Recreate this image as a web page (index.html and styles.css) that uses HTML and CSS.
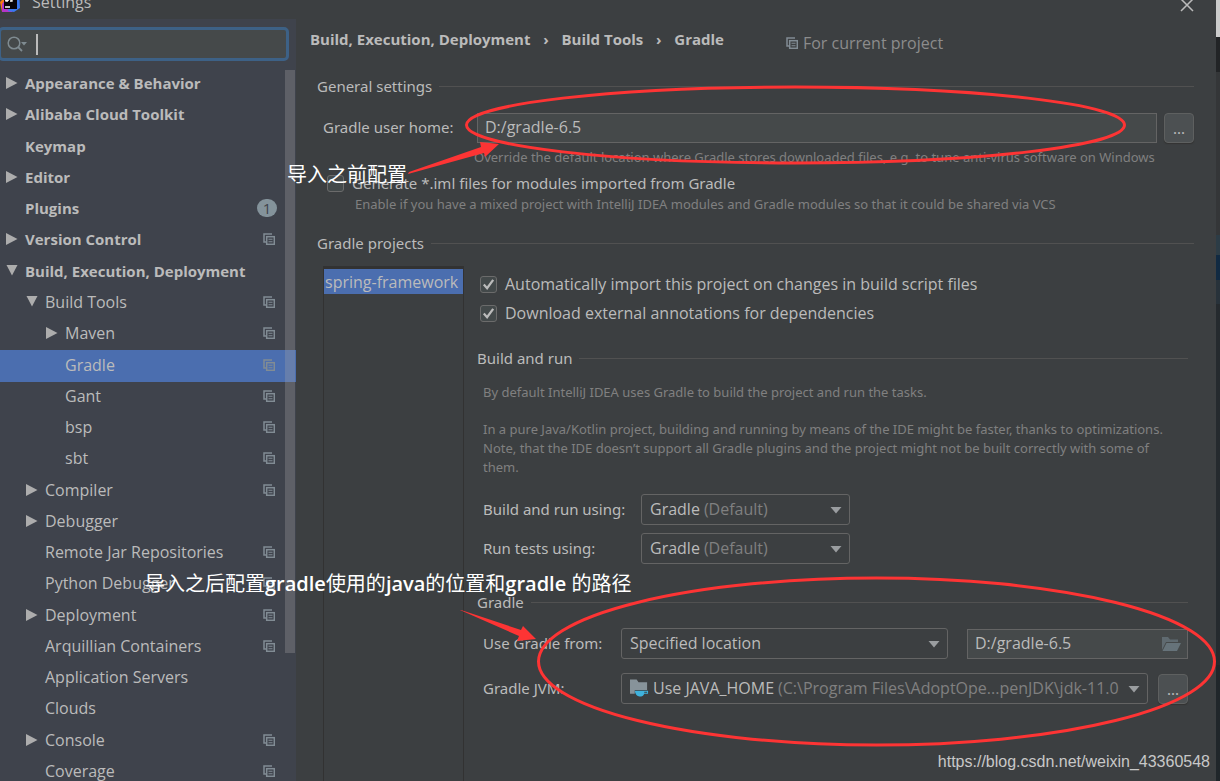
FILE: index.html
```html
<!DOCTYPE html>
<html lang="en">
<head>
<meta charset="utf-8">
<title>Settings</title>
<link rel="stylesheet" href="styles.css">
</head>
<body>
<svg class="defs" aria-hidden="true">
  <symbol id="copy" viewBox="0 0 12 12"><path d="M1 9V1H9M1 1V9H3" fill="none" stroke="currentColor" stroke-width="1.5"/><rect x="3.7" y="3.7" width="7.6" height="7.6" fill="none" stroke="currentColor" stroke-width="1.5"/><path d="M5.500 6.3H9.5M5.500 8.7H9.5" stroke="currentColor" stroke-width="1.1"/></symbol>
  <symbol id="right" viewBox="0 0 12 12"><path d="M0 0V12L11.500 6Z" fill="currentColor"/></symbol>
  <symbol id="down" viewBox="0 0 12 12"><path d="M0.500 0H11.500L6 10.500Z" fill="currentColor"/></symbol>
  <symbol id="drop" viewBox="0 0 12 8"><path d="M0.500 1H11.500L6 7.500Z" fill="currentColor"/></symbol>
</svg>
<div class="window">
  <header class="titlebar">
    <svg class="logo" width="20" height="20" viewBox="0 0 20 20" aria-hidden="true"><path d="M0 10L5 5V18L2 20Z" fill="#f97a12"/><path d="M2 12L5 8V17H14L12 20H2Z" fill="#b236c8"/><path d="M12 0H19L20 16L14 20L8 19L9 15H15Z" fill="#3a78f0"/><rect x="4" y="4" width="13" height="13" fill="#080408"/><path d="M5 8H9M6 6V9H8M12 5V9H10M5 15H10" stroke="#fff" stroke-width="1.3" fill="none"/></svg>
    <h1 class="title">Settings</h1>
    <button class="close" aria-label="Close"><svg width="14" height="14" viewBox="0 0 14 14"><path d="M1 1L13 13M13 1L1 13" stroke="#bbb" stroke-width="1.5"/></svg></button>
  </header>
  <div class="body">
    <aside class="sidebar">
      <label class="search">
        <svg width="22" height="16" viewBox="0 0 22 16" aria-hidden="true"><circle cx="7" cy="7" r="5.8" fill="none" stroke="#7f8b91" stroke-width="1.5"/><path d="M11 11L15 15" stroke="#7f8b91" stroke-width="1.8"/><path d="M14 6H20L17 9.5Z" fill="#7f8b91"/></svg>
        <span class="caret"></span>
        <input class="search-input" type="text" aria-label="Search settings">
      </label>
      <div class="tree-area">
        <ul class="tree">
          <li class="row top"><svg class="tri"><use href="#right"/></svg>Appearance &amp; Behavior</li>
          <li class="row top"><svg class="tri"><use href="#right"/></svg>Alibaba Cloud Toolkit</li>
          <li class="row top"><span class="tri"></span>Keymap</li>
          <li class="row top"><svg class="tri"><use href="#right"/></svg>Editor</li>
          <li class="row top"><span class="tri"></span>Plugins<span class="count">1</span></li>
          <li class="row top"><svg class="tri"><use href="#right"/></svg>Version Control<svg class="copy"><use href="#copy"/></svg></li>
          <li class="row top"><svg class="tri"><use href="#down"/></svg>Build, Execution, Deployment</li>
          <li class="row sub"><svg class="tri"><use href="#down"/></svg>Build Tools<svg class="copy"><use href="#copy"/></svg></li>
          <li class="row leaf"><svg class="tri"><use href="#right"/></svg>Maven<svg class="copy"><use href="#copy"/></svg></li>
          <li class="row leaf selected"><span class="tri"></span>Gradle<svg class="copy"><use href="#copy"/></svg></li>
          <li class="row leaf"><span class="tri"></span>Gant<svg class="copy"><use href="#copy"/></svg></li>
          <li class="row leaf"><span class="tri"></span>bsp<svg class="copy"><use href="#copy"/></svg></li>
          <li class="row leaf"><span class="tri"></span>sbt<svg class="copy"><use href="#copy"/></svg></li>
          <li class="row sub"><svg class="tri"><use href="#right"/></svg>Compiler<svg class="copy"><use href="#copy"/></svg></li>
          <li class="row sub"><svg class="tri"><use href="#right"/></svg>Debugger</li>
          <li class="row sub"><span class="tri"></span>Remote Jar Repositories<svg class="copy"><use href="#copy"/></svg></li>
          <li class="row sub"><span class="tri"></span>Python Debugger<svg class="copy"><use href="#copy"/></svg></li>
          <li class="row sub"><svg class="tri"><use href="#right"/></svg>Deployment<svg class="copy"><use href="#copy"/></svg></li>
          <li class="row sub"><span class="tri"></span>Arquillian Containers<svg class="copy"><use href="#copy"/></svg></li>
          <li class="row sub"><span class="tri"></span>Application Servers</li>
          <li class="row sub"><span class="tri"></span>Clouds</li>
          <li class="row sub"><svg class="tri"><use href="#right"/></svg>Console<svg class="copy"><use href="#copy"/></svg></li>
          <li class="row sub"><span class="tri"></span>Coverage<svg class="copy"><use href="#copy"/></svg></li>
        </ul>
        <div class="scrollbar"></div>
      </div>
    </aside>
    <main class="content">
      <div class="crumb-bar">
        <nav class="crumbs"><span>Build, Execution, Deployment</span><span class="sep">›</span><span>Build Tools</span><span class="sep">›</span><span>Gradle</span></nav>
        <span class="scope"><svg class="copy"><use href="#copy"/></svg>For current project</span>
      </div>
      <h2 class="section general">General settings</h2>
      <div class="home-row">
        <label class="home-label" for="home">Gradle user home:</label>
        <input class="field" id="home" type="text" value="D:/gradle-6.5">
        <button class="more" aria-label="Browse">...</button>
      </div>
      <p class="hint home-hint">Override the default location where Gradle stores downloaded files, e.g. to tune anti-virus software on Windows</p>
      <label class="check iml"><input type="checkbox"><span>Generate *.iml files for modules imported from Gradle</span></label>
      <p class="hint iml-hint">Enable if you have a mixed project with IntelliJ IDEA modules and Gradle modules so that it could be shared via VCS</p>
      <h2 class="section projects-title">Gradle projects</h2>
      <div class="projects">
        <ul class="project-list"><li class="project">spring-framework</li></ul>
        <div class="project-settings">
          <label class="check"><input type="checkbox" checked><span>Automatically import this project on changes in build script files</span></label>
          <label class="check"><input type="checkbox" checked><span>Download external annotations for dependencies</span></label>
          <h2 class="section run-title">Build and run</h2>
          <div class="inset">
            <p class="hint">By default IntelliJ IDEA uses Gradle to build the project and run the tasks.</p>
            <p class="hint para">In a pure Java/Kotlin project, building and running by means of the IDE might be faster, thanks to optimizations.<br>Note, that the IDE doesn’t support all Gradle plugins and the project might not be built correctly with some of<br>them.</p>
            <div class="form run-form">
              <label for="build">Build and run using:</label>
              <div class="combo small"><select id="build"><option>Gradle (Default)</option></select><span class="value" aria-hidden="true">Gradle <span class="dim">(Default)</span></span><svg class="drop"><use href="#drop"/></svg></div>
              <label for="tests">Run tests using:</label>
              <div class="combo small"><select id="tests"><option>Gradle (Default)</option></select><span class="value" aria-hidden="true">Gradle <span class="dim">(Default)</span></span><svg class="drop"><use href="#drop"/></svg></div>
            </div>
          </div>
          <h2 class="section gradle-title">Gradle</h2>
          <div class="inset form gradle-form">
            <label for="from">Use Gradle from:</label>
            <div class="pair from-pair">
              <div class="combo"><select id="from"><option>Specified location</option></select><span class="value" aria-hidden="true">Specified location</span><svg class="drop"><use href="#drop"/></svg></div>
              <div class="path"><input class="field" type="text" value="D:/gradle-6.5" aria-label="Gradle location"><svg class="folder" viewBox="0 0 20 16" aria-hidden="true"><path d="M1 14V1H7L9 3.500H17V6H5L1 14Z" fill="#5f6a70"/><path d="M5.500 7H20L16 15H1.500Z" fill="#66737a"/></svg></div>
            </div>
            <label for="jvm">Gradle JVM:</label>
            <div class="pair jvm-pair">
              <div class="combo"><select id="jvm"><option>Use JAVA_HOME (C:\Program Files\AdoptOpe...penJDK\jdk-11.0</option></select><span class="value" aria-hidden="true"><svg class="jdk" viewBox="0 0 20 18"><path d="M0 0H7L9 3H18V11H5V15H0Z" fill="#87939a"/><path d="M5 12H19V15H15Q14 18 10 18Q6 18 5 12Z" fill="#3fb2dd"/><path d="M15 13H18V14H15Z" fill="#3c3f41"/></svg>Use JAVA_HOME <span class="dim">(C:\Program Files\AdoptOpe...penJDK\jdk-11.0</span></span><svg class="drop"><use href="#drop"/></svg></div>
              <button class="more" aria-label="Choose JVM">...</button>
            </div>
          </div>
        </div>
      </div>
    </main>
  </div>
  <div class="behind" aria-hidden="true"></div>
</div>
<div class="notes">
  <svg class="marks" width="1220" height="781" viewBox="0 0 1220 781" aria-hidden="true">
    <g fill="none" stroke="#fd3434" stroke-width="3"><ellipse cx="795.5" cy="125" rx="329" ry="38"/><ellipse cx="876.5" cy="661.5" rx="338" ry="83.5"/></g>
    <path fill="#fd3434" d="M408 174L409 172L481 147L480 142L499 144L485 157L484 153Z"/>
    <path fill="#fd3434" d="M460 610L461 610L521 630L523 626L536 639L517 641L519 636Z"/>
  </svg>
  <span class="note first">导入之前配置</span>
  <span class="note second">导入之后配置<b>gradle</b>使用的<b>java</b>的位置和<b>gradle</b> 的路径</span>
  <span class="watermark">https://blog.csdn.net/weixin_43360548</span>
</div>
</body>
</html>
```
FILE: styles.css
```css
* { box-sizing: border-box; }
body { margin: 0; background: #3c3f41; color: #bbb; font: 15px/20px "Noto Sans", "Noto Sans CJK SC", sans-serif; overflow: hidden; }
h1, h2, p, ul { margin: 0; padding: 0; font-size: inherit; font-weight: 400; list-style: none; }
button, input, select { font: inherit; color: inherit; }
.defs { position: absolute; width: 0; height: 0; }

.window { position: relative; display: flex; flex-direction: column; height: 100vh; overflow: hidden; padding-right: 4px; }
.titlebar { display: flex; align-items: flex-end; height: 19px; flex: none; overflow: hidden; padding: 0 22px 7px 0; }
.logo { flex: none; }
.title { margin-left: 12px; font: 16px/20px "Open Sans", sans-serif; }
.close { margin-left: auto; border: 0; padding: 0; background: none; line-height: 0; }
.behind { position: absolute; top: 0; right: 0; bottom: 0; width: 4px; background: linear-gradient(#ccc 0 37px, #222426 37px 72px, #343638 72px 235px, #2c3c46 235px 255px, #112a42 255px 280px, #28323a 280px 304px, #252a2e 304px 665px, #20262a 665px); }

.body { display: flex; flex: 1; min-height: 0; }
.sidebar { display: flex; flex-direction: column; width: 296px; flex: none; background: #3f434c; padding-top: 8px; }
.search { display: flex; align-items: center; height: 34px; flex: none; width: 291px; margin-left: -2px; padding-left: 6px; background: #45494a; border: 3px solid #3d6186; border-radius: 5px; }
.caret { width: 2px; height: 21px; margin-left: 7px; background: #bbb; }
.search-input { flex: 1; min-width: 0; border: 0; outline: 0; background: none; padding: 0 4px; }
.tree-area { position: relative; display: flex; flex: 1; min-height: 0; padding-top: 8px; margin-bottom: -7px; }
.tree { display: flex; flex-direction: column; flex: 1; }
.row { display: flex; align-items: center; flex: 1 0 31px; padding: 0 21px 3px 0; font: 16px/20px "Open Sans", sans-serif; }
.top { padding-left: 6px; font-size: 15px; font-weight: 700; }
.sub { padding-left: 26px; }
.leaf { padding-left: 46px; }
.selected { background: #4b6eaf; }
.tri { width: 12px; height: 12px; margin-right: 7px; color: #adadad; flex: none; }
.copy { width: 12px; height: 12px; margin-left: auto; color: #818c94; flex: none; }
.count { width: 20px; height: 18px; margin-left: auto; margin-right: -2px; border-radius: 9px; background: #84939b; color: #3f434c; font-weight: 400; line-height: 18px; text-align: center; }
.scrollbar { position: absolute; right: 1px; top: 9px; width: 10px; height: 583px; background: rgba(166, 166, 166, 0.3); }

.content { display: flex; flex-direction: column; flex: 1; min-width: 0; padding: 8px 22px 0 21px; }
.crumb-bar { display: flex; align-items: flex-start; margin-left: -7px; height: 49px; flex: none; padding-top: 2px; }
.crumbs { display: flex; font-family: "Open Sans", sans-serif; font-weight: 700; }
.sep { width: 31px; text-align: center; }
.scope { display: flex; align-items: center; gap: 5px; margin-left: 62px; padding-top: 4px; color: #8c8c8c; font: 16px/20px "Open Sans", sans-serif; }
.section { display: flex; align-items: center; gap: 7px; flex: none; }
.section::after { content: ""; flex: 1; height: 1px; background: #515151; }
.home-row { display: flex; align-items: center; margin-top: 17px; padding-left: 6px; }
.home-label { width: 154px; padding-bottom: 2px; }
.field { flex: 1; min-width: 0; height: 30px; padding: 0 7px 2px; background: #45494a; border: 1px solid #646464; font: 16px/20px "Open Sans", sans-serif; }
.more { width: 30px; height: 30px; margin-left: 7px; padding: 0; background: #4c5052; border: 1px solid #5e6060; border-radius: 4px; box-shadow: 0 1px 1px #333; }
.hint { font-size: 13px; line-height: 19px; color: #808080; }
.home-hint { margin: 5px 0 0 157px; white-space: nowrap; }
.iml { margin: 6px 0 0 10px; }
.iml-hint { margin: 2px 0 0 38px; white-space: nowrap; }
.check { display: flex; align-items: center; gap: 8px; }
.check input { appearance: none; width: 17px; height: 17px; margin: 0; flex: none; background: #43494a; border: 1px solid #6b6b6b; border-radius: 3px; }
.check input:checked { background: #43494a url("data:image/svg+xml,%3Csvg xmlns='http://www.w3.org/2000/svg' viewBox='0 0 16 16'%3E%3Cpath d='M3 8L6.500 12L13 3' fill='none' stroke='%23bbb' stroke-width='2.400'/%3E%3C/svg%3E") center / 15px no-repeat; }
.projects-title { margin-top: 19px; }
.projects { display: flex; flex: 1; margin: 13px 6px 0 6px; }
.project-list { width: 141px; flex: none; border: 1px solid #323232; border-top-width: 3px; border-bottom: 0; }
.project { height: 25px; padding-left: 1px; font: 16px/26px "Open Sans", sans-serif; background: #4b6eaf; white-space: nowrap; }
.project-settings { flex: 1; min-width: 0; padding: 8px 0 0 13px; }
.project-settings .check { margin: 0 0 9px 3px; font: 16px/20px "Open Sans", sans-serif; }
.run-title { margin-top: 25px; }
.inset { padding-left: 6px; }
.inset > .hint:first-child { margin-top: 15px; }
.para { margin-top: 18px; white-space: nowrap; }
.form { display: grid; align-items: center; }
.form > label { padding-bottom: 2px; }
.run-form { grid-template-columns: 158px 209px; row-gap: 8px; margin-top: 17px; }
.gradle-title { margin-top: 28px; }
.gradle-form { grid-template-columns: 138px 1fr; row-gap: 14px; margin-top: 16px; }
.combo { display: grid; grid-template-columns: 1fr 26px; align-items: center; flex: 1; min-width: 0; }
.combo select { grid-area: 1 / 1 / 2 / 3; appearance: none; width: 100%; min-width: 0; height: 31px; padding: 0 7px; color: transparent; background: #3c3f41; border: 1px solid #646464; border-radius: 3px; }
.combo option { color: #bbb; }
.value { grid-area: 1 / 1; display: flex; gap: 4px; padding: 0 0 2px 9px; font: 16px/20px "Open Sans", sans-serif; white-space: nowrap; overflow: hidden; pointer-events: none; }
.drop { grid-area: 1 / 2; width: 12px; height: 8px; margin-left: 6px; color: #9a9da0; pointer-events: none; }
.dim { color: #808080; }
.pair { display: flex; align-items: center; }
.from-pair { gap: 19px; }
.jvm-pair { gap: 3px; }
.path { display: grid; align-items: center; width: 221px; flex: none; }
.path .field { grid-area: 1 / 1; width: 100%; }
.folder { grid-area: 1 / 1; justify-self: end; width: 20px; height: 16px; margin-right: 7px; }
.jdk { width: 19px; height: 18px; flex: none; align-self: center; }

.notes { position: absolute; inset: 0; pointer-events: none; overflow: hidden; }
.marks { position: absolute; left: 0; top: 0; }
.note { position: absolute; color: #fff; font-size: 20px; line-height: 28px; font-family: "Open Sans", "Noto Sans CJK SC", sans-serif; white-space: nowrap; }
.note b { font-weight: 600; }
.first { left: 287px; top: 161px; }
.second { left: 145px; top: 570px; }
.watermark { position: absolute; right: 10px; bottom: 9px; color: #c8c8c8; font: 16px/20px "Liberation Sans", sans-serif; }
```
